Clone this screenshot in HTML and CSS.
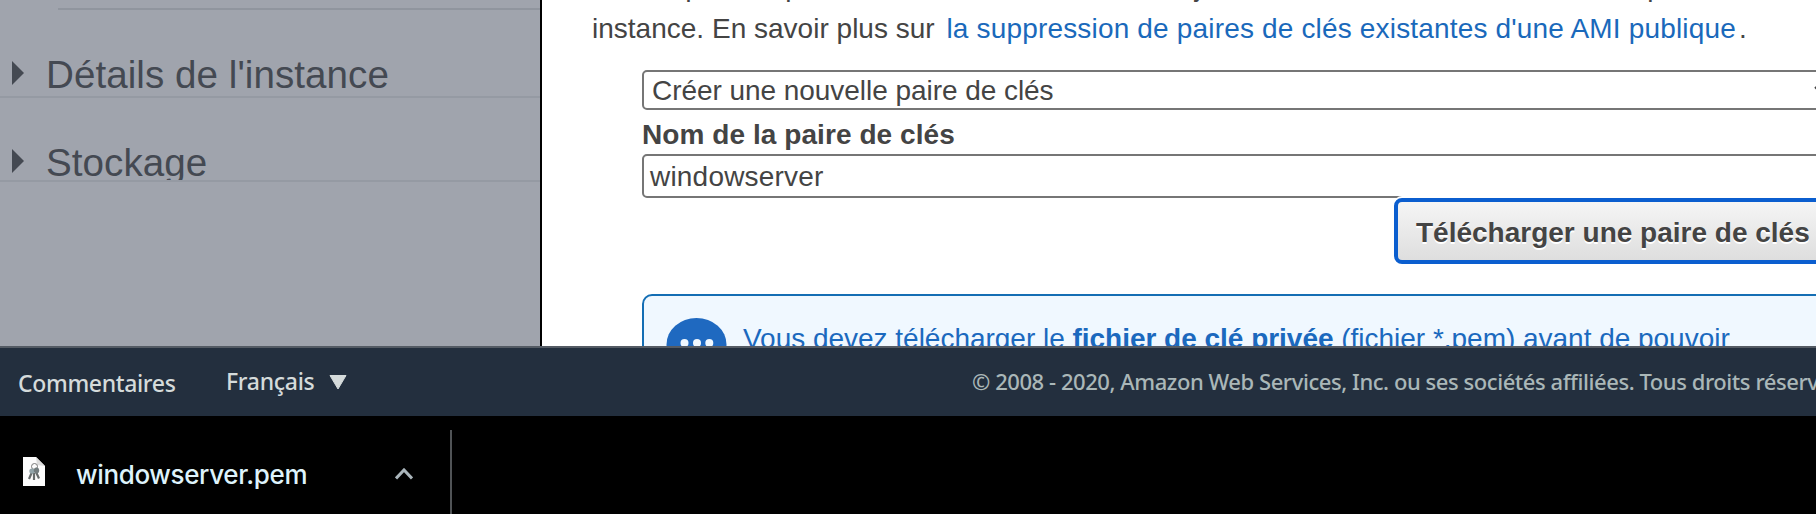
FILE: index.html
```html
<!DOCTYPE html>
<html lang="fr">
<head>
<meta charset="utf-8">
<title>Paire de clés</title>
<link rel="stylesheet" href="styles.css">
</head>
<body>
<div class="workspace">
  <aside class="summary">
    <div class="summary-rule"></div>
    <section class="summary-section first">
      <svg class="caret" viewBox="0 0 12 24"><path d="M0 0L12 12L0 24Z"/></svg>
      <h2 class="summary-title">Détails de l'instance</h2>
    </section>
    <section class="summary-section second">
      <svg class="caret" viewBox="0 0 12 24"><path d="M0 0L12 12L0 24Z"/></svg>
      <h2 class="summary-title">Stockage</h2>
    </section>
  </aside>
  <main class="dialog">
    <p class="note">Remarque : La paire de clés sélectionnée sera ajoutée à l'ensemble de clés autorisé pour cette<br>instance. En savoir plus sur <a class="link">la suppression de paires de clés existantes d'une AMI publique</a>.</p>
    <div class="form">
      <div class="select"><span>Créer une nouvelle paire de clés</span><svg class="select-arrow" viewBox="0 0 16 9"><path d="M1 1L8 8L15 1" fill="none" stroke="#444" stroke-width="2"/></svg></div>
      <label class="label">Nom de la paire de clés</label>
      <div class="input">windowserver</div>
      <button class="download">Télécharger une paire de clés</button>
      <div class="info">
        <svg class="info-icon" viewBox="0 0 61 53"><ellipse cx="30.5" cy="26.5" rx="30" ry="26.5" fill="#1f69c0"/><g fill="#f0f8ff"><circle cx="18.5" cy="25" r="4"/><circle cx="31" cy="25" r="4"/><circle cx="43.3" cy="25" r="4"/></g></svg>
        <p class="info-text">Vous devez télécharger le <b>fichier de clé privée</b> (fichier *.pem) avant de pouvoir</p>
      </div>
    </div>
  </main>
</div>
<footer class="footer">
  <span class="feedback">Commentaires</span>
  <span class="language">Français</span>
  <svg class="language-arrow" viewBox="0 0 18 15"><path d="M1 .5H17L9 14Z" stroke-width="1" stroke-linejoin="round"/></svg>
  <span class="copyright">© 2008 - 2020, Amazon Web Services, Inc. ou ses sociétés affiliées. Tous droits réservés.</span>
</footer>
<div class="downloads">
  <div class="download-item">
    <svg class="file-icon" viewBox="0 0 22 29">
      <path d="M0 0H13L22 9V29H0Z" fill="#fcfcfc"/>
      <path d="M13 0L14 8L22 9Z" fill="#dcdcdc"/>
      <circle cx="11.5" cy="9.5" r="3" fill="none" stroke="#777" stroke-width="1"/>
      <path d="M9 15L6 22M11 16V23M13 15L16 21.5" stroke="#666b6b" stroke-width="2.2"/>
      <ellipse cx="9" cy="14" rx="2.7" ry="2.6" fill="#91a3a8"/><ellipse cx="13.5" cy="13.5" rx="2.7" ry="3" fill="#727c7e"/>
    </svg>
    <span class="file-name">windowserver.pem</span>
    <svg class="chevron" viewBox="0 0 18 12"><path d="M1 10.5L9 2L17 10.5"/></svg>
  </div>
</div>
</body>
</html>
```

FILE: styles.css
```css
* { box-sizing: border-box; }
body {
  margin: 0;
  width: 1816px;
  height: 514px;
  overflow: hidden;
  display: flex;
  flex-direction: column;
  background: #000;
  font-family: "Liberation Sans", Arial, sans-serif;
}
p, h2 { margin: 0; }
svg { display: block; flex: none; }

.workspace {
  height: 346px;
  flex: none;
  display: grid;
  grid-template-columns: 540px 1276px;
  overflow: hidden;
}
.summary { background: #a0a4ad; }
.summary-rule { margin: 8px 0 0 58px; height: 2px; background: #90959e; }
.summary-section {
  display: flex;
  padding-left: 12px;
  border-bottom: 2px solid #959aa3;
  overflow: hidden;
}
.first { height: 88px; padding-top: 41px; }
.second { height: 84px; padding-top: 41px; }
.caret { width: 12px; height: 24px; margin-top: 10px; fill: #444952; }
.summary-title {
  margin-left: 22px;
  font-size: 38.6px;
  line-height: 48px;
  font-weight: 400;
  letter-spacing: .05px;
  color: #444952;
  white-space: nowrap;
}

.dialog {
  height: 346px;
  background: #fff;
  border-left: 2px solid #000;
  overflow: hidden;
  color: #444;
  font-size: 28px;
}
.note {
  margin: -34px 0 0 50px;
  line-height: 42px;
  white-space: nowrap;
  letter-spacing: .01px;
}
.link { margin: 0 3px 0 4px; color: #1a69bb; letter-spacing: .17px; }
.form { margin: 20px 0 0 100px; width: 1230px; display: flex; flex-direction: column; }
.select, .input {
  border: 2px solid #767676;
  border-radius: 5px;
  white-space: nowrap;
}
.select {
  height: 40px;
  padding: 1px 40px 0 8px;
  display: flex;
  align-items: center;
  justify-content: space-between;
  line-height: 36px;
  letter-spacing: -.05px;
}
.select-arrow { width: 16px; height: 9px; }
.label { height: 44px; line-height: 50px; font-weight: 700; letter-spacing: .07px; }
.input { height: 44px; padding-left: 6px; line-height: 41px; letter-spacing: .2px; }
.download {
  align-self: flex-end;
  width: 478px;
  height: 66px;
  padding: 3px 0 0 18px;
  border: 4px solid #0b5ecf;
  border-radius: 8px;
  background: linear-gradient(#f5f5f5, #dedede);
  box-shadow: 0 -2px 0 #fff;
  color: #444;
  font: 700 28px/55px "Liberation Sans", Arial, sans-serif;
  text-align: left;
  text-shadow: 0 2px 0 #fff;
  white-space: nowrap;
}
.info {
  margin-top: 30px;
  height: 120px;
  padding: 22px 0 0 22px;
  display: flex;
  flex: none;
  gap: 16px;
  border: 2px solid #146eb4;
  border-radius: 10px;
  background: #f0f8ff;
  color: #1b69be;
}
.info-icon { width: 61px; height: 53px; }
.info-text { line-height: 42px; white-space: nowrap; letter-spacing: -.02px; }

.footer {
  height: 70px;
  flex: none;
  display: flex;
  border-top: 2px solid #545b64;
  background: #232f3e;
  color: #d5dbdb;
  font: 500 23px/32px "Noto Sans", sans-serif;
  white-space: nowrap;
  overflow: hidden;
}
.footer > * { flex: none; }
.feedback { margin: 19px 0 0 18px; width: 208px; letter-spacing: -.35px; }
.language { margin-top: 17px; width: 103px; letter-spacing: -.3px; }
.language-arrow { width: 18px; height: 15px; margin-top: 27px; fill: #d5dbdb; stroke: #d5dbdb; }
.copyright { margin: 17px 0 0 625px; color: #aab7b8; font-size: 22px; letter-spacing: -.44px; }

.downloads { height: 98px; flex: none; padding-top: 14px; }
.download-item {
  width: 452px;
  height: 84px;
  padding: 27px 0 0 23px;
  display: flex;
  border-right: 2px solid #505356;
}
.file-icon { width: 22px; height: 29px; }
.file-name {
  width: 319px;
  margin: 1px 0 0 31px;
  font: 450 26px/34px Inter, sans-serif;
  letter-spacing: -.35px;
  color: #def3fb;
}
.chevron { width: 18px; height: 12px; margin-top: 11px; fill: none; stroke: #aab5bb; stroke-width: 3; }
```
